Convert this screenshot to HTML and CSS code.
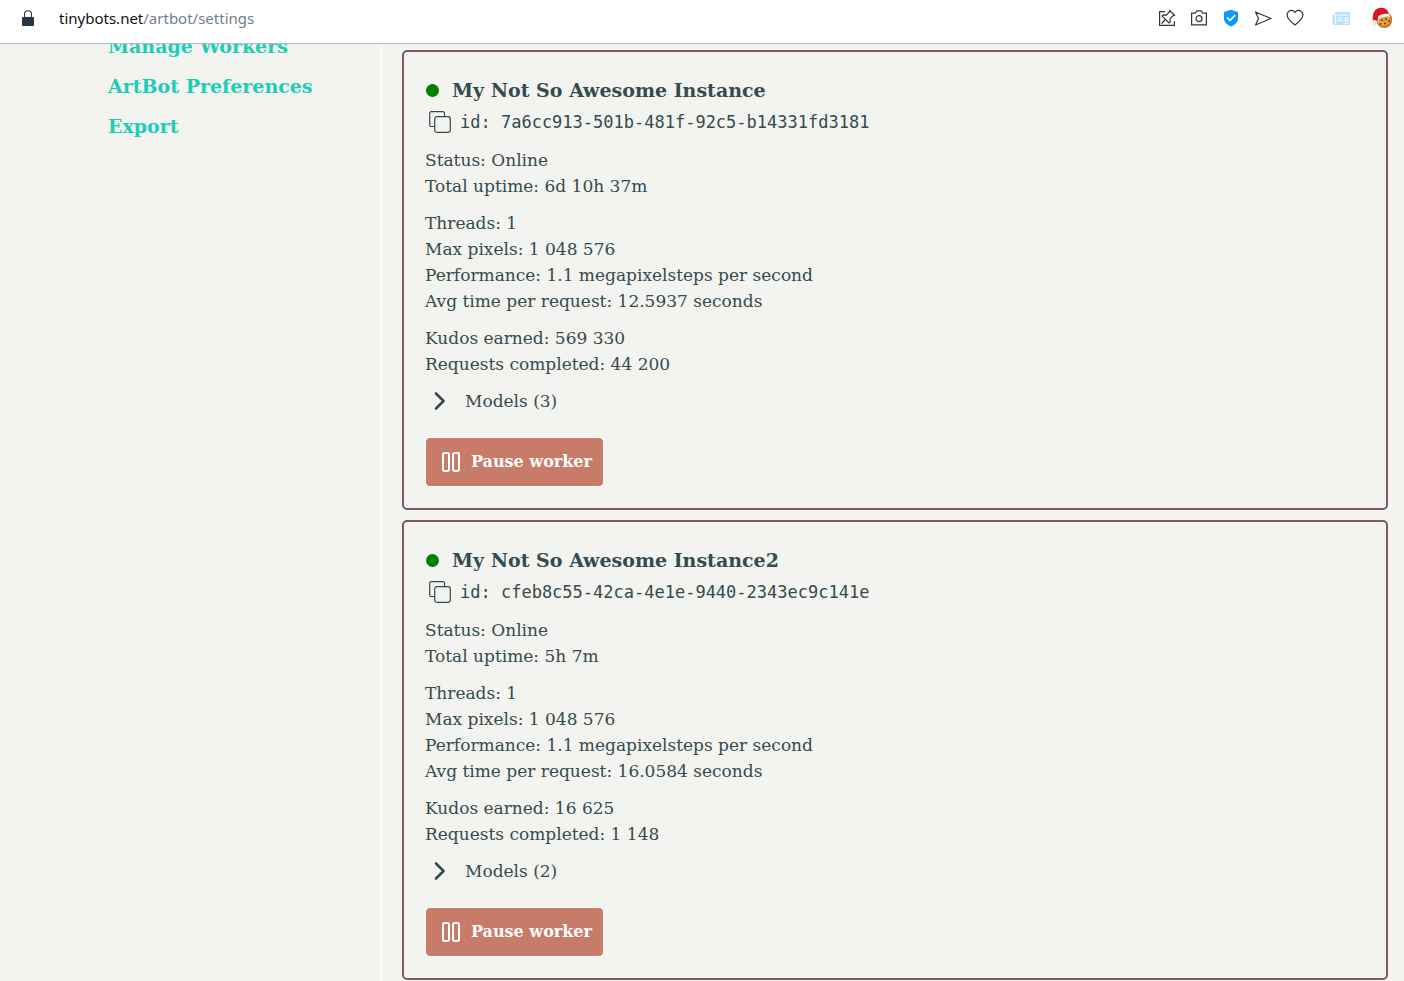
FILE: index.html
```html
<!DOCTYPE html>
<html lang="en">
<head>
<meta charset="utf-8">
<meta name="viewport" content="width=device-width, initial-scale=1">
<title>ArtBot settings</title>
<link rel="stylesheet" href="styles.css">
</head>
<body>
<svg class="defs" aria-hidden="true">
  <symbol id="copy" viewBox="0 0 22 22"><g fill="none" stroke="currentColor" stroke-width="1.2"><path d="M5.500 15.500H2.200A1.500 1.500 0 0 1 .7 14V2.200A1.500 1.500 0 0 1 2.200.7H14a1.500 1.500 0 0 1 1.500 1.500v3.300"/><rect x="5.700" y="5.700" width="15.600" height="15.600" rx="2.200"/></g></symbol>
  <symbol id="chevron" viewBox="0 0 12 20"><path d="M2 2.500 9.600 10 2 17.500" fill="none" stroke="currentColor" stroke-width="2.600" stroke-linecap="round" stroke-linejoin="round"/></symbol>
  <symbol id="pause" viewBox="0 0 18 20"><g fill="none" stroke="currentColor" stroke-width="2"><rect x="1" y="1" width="6" height="18" rx="1.400"/><rect x="11" y="1" width="6" height="18" rx="1.400"/></g></symbol>
</svg>
<div class="window">
  <header class="toolbar">
    <svg class="lock" viewBox="0 0 12 16" aria-label="Secure"><path d="M2.500 8V4.200a3.500 3.500 0 0 1 7 0V8" fill="none" stroke="#2b3640" stroke-width="1.100"/><rect y="7" width="12" height="9" rx="1" fill="#2b3640"/></svg>
    <a class="address" href="#">tinybots.net<span class="path">/artbot/settings</span></a>
    <div class="tools">
      <button class="tool" aria-label="Pin page"><svg viewBox="0 0 18 18"><g fill="none" stroke="#2b3640" stroke-width="1.200"><path d="M7 2.600H1.600v13.800h14.800v-4.200"/><path d="m11.700 1.500 4.800 4.800-1.600.5-2.800 2.900.1 3.200-1.200 1.100-6.900-6.900 1.300-1.200 3.100.2L11.200 3ZM7.500 10.500l-4 4"/></g></svg></button>
      <button class="tool" aria-label="Snapshot"><svg viewBox="0 0 18 18"><g fill="none" stroke="#2b3640" stroke-width="1.200"><path d="M1.600 4.200h3.700l1.400-2.400h4.600l1.400 2.400h3.700v11.600H1.600Z"/><circle cx="9" cy="9.700" r="3"/></g></svg></button>
      <button class="tool" aria-label="Tracker protection"><svg viewBox="0 0 18 18"><path d="M9 .8 16 3v6.500c0 4-3.500 6.500-7 8-3.500-1.500-7-4-7-8V3Z" fill="#0a98ff"/><path d="m5 8.500 3 2.900 5.200-5.200" fill="none" stroke="#fff" stroke-width="1.700"/></svg></button>
      <button class="tool" aria-label="Send"><svg viewBox="0 0 18 18"><path d="M1.500 3 17 9.500 1.500 16l3-6.500Z" fill="none" stroke="#2b3640" stroke-width="1.200" stroke-linejoin="round"/></svg></button>
      <button class="tool" aria-label="Bookmark"><svg viewBox="0 0 18 18"><path d="M9 3.400C7.500.9 4.600.8 2.800 2.400.8 4.200.8 7 2.200 9.300 3.700 11.700 6.300 14 9 16c2.700-2 5.300-4.300 6.800-6.700C17.200 7 17.200 4.200 15.200 2.400 13.400.8 10.500.9 9 3.400Z" fill="none" stroke="#2b3640" stroke-width="1.200"/></svg></button>
      <button class="tool extension" aria-label="News"><svg viewBox="0 0 18 18"><path d="M3 3h15v13H2.500A2 2 0 0 1 .6 14V6H3" fill="#b5e2ff"/><g fill="none" stroke="#fff"><path d="M3.500 6v8.500M5 6h11.500M12.500 14.500h4"/></g><path d="M5.500 8.500h5v1h-5zM5.500 11h5v1h-5z" fill="#fff"/><path d="M12.500 8h4v5h-4z" fill="#e3f4ff"/></svg></button>
      <button class="tool cookie" aria-label="Cookie manager"><svg viewBox="0 0 22 22"><circle cx="13.200" cy="13" r="8" fill="#c77722"/><circle cx="12.500" cy="12" r="7" fill="#e7a247"/><g fill="#704015"><circle cx="11" cy="13" r="1"/><circle cx="15" cy="12" r="1"/><circle cx="18" cy="14" r="1"/><circle cx="14" cy="16.500" r="1"/><circle cx="9.500" cy="17" r="1"/></g><path d="M2 14C1.200 8 2.500 2.500 8 1c4.500-1 8 .5 9.500 4.500l.5 3C12 7.500 8 10 5 15Z" fill="#dc1420"/><path d="M7 9.500c3-2.500 7-3.300 11-2.500l1 2.800C14 9 10 10 7 13Z" fill="#fff3ec"/><circle cx="3.500" cy="15.500" r="2.600" fill="#e9e9ee"/></svg></button>
    </div>
  </header>
  <div class="page">
    <nav class="sidebar" aria-label="Settings">
      <a href="#">Manage Workers</a>
      <a href="#">ArtBot Preferences</a>
      <a href="#">Export</a>
    </nav>
    <main class="workers">
      <article class="card">
        <h2 class="name"><span class="dot"></span>My Not So Awesome Instance</h2>
        <div class="worker-id"><button class="copy" aria-label="Copy id"><svg><use href="#copy"/></svg></button><code>id: 7a6cc913-501b-481f-92c5-b14331fd3181</code></div>
        <div class="stats">
          <div><p>Status: Online</p><p>Total uptime: 6d 10h 37m</p></div>
          <div><p>Threads: 1</p><p>Max pixels: 1 048 576</p><p>Performance: 1.1 megapixelsteps per second</p><p>Avg time per request: 12.5937 seconds</p></div>
          <div><p>Kudos earned: 569 330</p><p>Requests completed: 44 200</p></div>
          <button class="models" aria-expanded="false"><svg><use href="#chevron"/></svg>Models (3)</button>
        </div>
        <button class="pause"><svg><use href="#pause"/></svg>Pause worker</button>
      </article>
      <article class="card">
        <h2 class="name"><span class="dot"></span>My Not So Awesome Instance2</h2>
        <div class="worker-id"><button class="copy" aria-label="Copy id"><svg><use href="#copy"/></svg></button><code>id: cfeb8c55-42ca-4e1e-9440-2343ec9c141e</code></div>
        <div class="stats">
          <div><p>Status: Online</p><p>Total uptime: 5h 7m</p></div>
          <div><p>Threads: 1</p><p>Max pixels: 1 048 576</p><p>Performance: 1.1 megapixelsteps per second</p><p>Avg time per request: 16.0584 seconds</p></div>
          <div><p>Kudos earned: 16 625</p><p>Requests completed: 1 148</p></div>
          <button class="models" aria-expanded="false"><svg><use href="#chevron"/></svg>Models (2)</button>
        </div>
        <button class="pause"><svg><use href="#pause"/></svg>Pause worker</button>
      </article>
    </main>
  </div>
</div>
</body>
</html>
```
FILE: styles.css
```css
* { box-sizing: border-box; }
body {
  margin: 0;
  background: #f3f3ef;
  color: #344b50;
  font: 17px/26px "Roboto Slab", "DejaVu Serif", serif;
}
button {
  margin: 0;
  padding: 0;
  border: 0;
  background: none;
  color: inherit;
  font: inherit;
  cursor: pointer;
}
p, h2 { margin: 0; }
a { text-decoration: none; }
svg { display: block; flex: none; }
.defs { position: absolute; width: 0; height: 0; }
.window { display: flex; flex-direction: column; height: 100vh; }

.toolbar {
  display: flex;
  flex: none;
  align-items: center;
  height: 44px;
  padding: 0 11px 7px 22px;
  border-bottom: 1px solid #b2bccb;
  background: #fff;
}
.lock { width: 12px; height: 16px; margin-right: 25px; }
.address { color: #111; font: 15px/24px "Segoe UI", "Noto Sans", sans-serif; }
.path { color: #71808f; }
.tools { display: flex; align-items: center; gap: 14px; margin-left: auto; }
.tool svg { width: 18px; height: 18px; }
.extension { margin-left: 14px; }
.cookie { margin-left: 7px; }
.cookie svg { width: 22px; height: 22px; }

.page { display: flex; flex: 1; min-height: 0; overflow: hidden; }
.sidebar {
  display: flex;
  flex: none;
  flex-direction: column;
  width: 382px;
  padding-left: 108px;
  border-right: 1px solid #fff;
}
.sidebar a {
  color: #1dcdb8;
  font-size: 19px;
  font-weight: 700;
  line-height: 40px;
}
.sidebar a:first-child { margin-top: -18px; }
.workers {
  display: flex;
  flex: 1;
  flex-direction: column;
  gap: 10px;
  padding: 6px 16px 0 20px;
}
.card {
  flex: none;
  padding: 22px 21px 21px;
  border: 2px solid #7e5869;
  border-radius: 5px;
}
.name {
  display: flex;
  align-items: center;
  gap: 13px;
  font-size: 19px;
  line-height: 32px;
}
.dot { width: 13px; height: 13px; margin-left: 1px; border-radius: 50%; background: #008000; }
.worker-id { display: flex; align-items: center; gap: 9px; height: 32px; padding-left: 4px; }
.copy svg { width: 22px; height: 22px; }
.worker-id code { font: 17px/26px "DejaVu Sans Mono", monospace; }
.stats { display: flex; flex-direction: column; align-items: flex-start; gap: 11px; margin-top: 9px; }
.models { display: flex; align-items: center; gap: 19px; padding-left: 9px; }
.models svg { width: 12px; height: 20px; }
.pause {
  display: flex;
  align-items: center;
  gap: 11px;
  height: 50px;
  margin-top: 23px;
  padding: 0 11px 0 16px;
  border: 1px solid #fff;
  border-radius: 5px;
  background: #c97b69;
  color: #fff;
  font-size: 16px;
  font-weight: 700;
}
.pause svg { width: 18px; height: 20px; }
```
